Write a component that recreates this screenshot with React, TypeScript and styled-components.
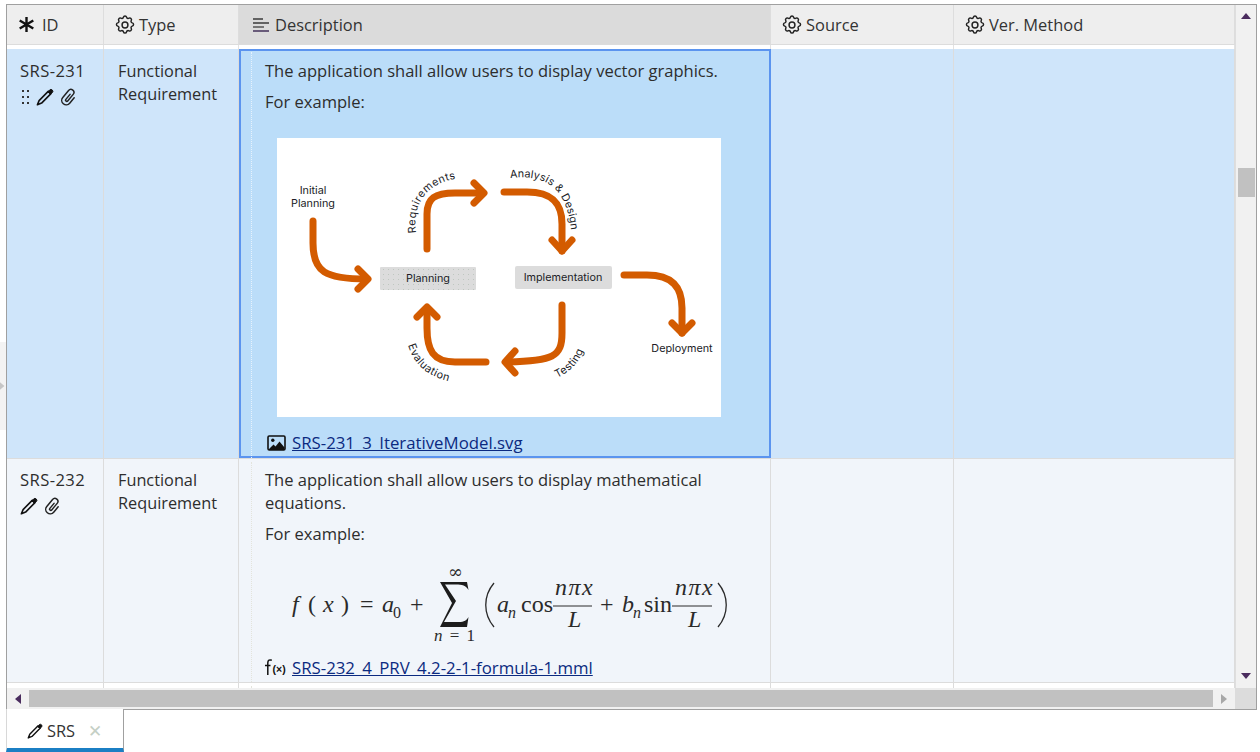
import React from "react";
import styled, { createGlobalStyle } from "styled-components";

const Global = createGlobalStyle`
  html, body { margin: 0; padding: 0; background: #fff; }
  body { width: 1260px; height: 752px; overflow: hidden; font-family: "Open Sans", "Noto Sans", sans-serif; color: #2d2d2d; }
`;

const COLS = "97px 135px 532px 183px 281px";

const Page = styled.div`
  display: flex;
  width: 1260px;
  height: 752px;
`;
const Rail = styled.div`
  width: 6px;
  padding-top: 342px;
  flex: none;
`;
const RailHandle = styled.div`
  height: 88px;
  background: #f3f3f3;
  display: flex;
  align-items: center;
  svg { margin-left: -2px; }
`;
const Main = styled.div`
  width: 1251px;
  display: flex;
  flex-direction: column;
  padding-top: 4px;
`;
const Frame = styled.div`
  height: 706px;
  box-sizing: border-box;
  border: 1px solid #a0a0a0;
  display: grid;
  grid-template-columns: 1228px 21px;
  grid-template-rows: 683px 21px;
  background: #fff;
`;
const TableArea = styled.div`
  overflow: hidden;
  display: flex;
  flex-direction: column;
`;
const HeaderRow = styled.div`
  display: grid;
  grid-template-columns: ${COLS};
  height: 40px;
  flex: none;
  background: #eeeeee;
  border-bottom: 1px solid #dcdcdc;
  box-sizing: border-box;
`;
const HeadCell = styled.div<{ $active?: boolean }>`
  display: flex;
  align-items: center;
  gap: 4px;
  padding-left: ${(p) => (p.$active ? 11 : 10)}px;
  box-sizing: border-box;
  font-size: 16.45px;
  color: #333;
  background: ${(p) => (p.$active ? "#dbdbdb" : "#eeeeee")};
  border-right: 1px solid #dddddd;
`;
const IconSlot = styled.span`
  width: 21px;
  display: flex;
  justify-content: center;
  align-items: center;
  flex: none;
  svg { flex: none; }
`;
const Spacer = styled.div`
  display: grid;
  grid-template-columns: ${COLS};
  height: 4px;
  flex: none;
`;
const SpacerCell = styled.div`
  border-right: 1px solid #e2e2e2;
`;
const Row = styled.div<{ $h: number; $bg: string; $pad: number }>`
  display: grid;
  grid-template-columns: ${COLS};
  height: ${(p) => p.$h}px;
  flex: none;
  background: ${(p) => p.$bg};
  border-bottom: 1px solid #dcdcdc;
  box-sizing: border-box;
  & > * { padding-top: ${(p) => p.$pad}px; }
`;
const Cell = styled.div`
  box-sizing: border-box;
  border-right: 1px solid #dcdcdc;
  padding-left: 14px;
  padding-right: 10px;
  font-size: 16.3px;
  line-height: 23px;
  color: #2d2d2d;
`;
const IdCell = styled(Cell)`
  padding-left: 13px;
  padding-right: 0;
  font-size: 16.6px;
  letter-spacing: 0.4px;
`;
const IdText = styled.div`
  margin: -1px 0 1px;
`;
const Actions = styled.div`
  display: flex;
  align-items: center;
  height: 24px;
  margin-top: 3px;
  gap: 6px;
`;
const Description = styled.div<{ $selected?: boolean }>`
  position: relative;
  box-sizing: border-box;
  border-right: 1px solid #dcdcdc;
  padding-left: 26px;
  padding-right: 24px;
  font-size: 16.55px;
  line-height: 23px;
  color: #2d2d2d;
  background: ${(p) => (p.$selected ? "#bbddf9" : "transparent")};
  outline: ${(p) => (p.$selected ? "2px solid #5b94ef" : "none")};
  outline-offset: -2px;
  &::before {
    content: "";
    position: absolute;
    left: 12px;
    top: 3px;
    bottom: 0;
    border-left: 1px dotted ${(p) => (p.$selected ? "#e6f2fc" : "#e3e4dc")};
  }
`;
const Para = styled.p`
  margin: 0 0 8px;
  &:first-child { margin-top: -1px; }
`;
const Figure = styled.div`
  margin: 25px 0 0 12px;
  width: 444px;
  height: 279px;
  background: #fff;
  svg { display: block; }
`;
const Formula = styled.div`
  margin: 0 0 0 -25px;
  padding-top: 1px;
  height: 103px;
  box-sizing: border-box;
  svg { display: block; }
`;
const FileLine = styled.div<{ $mt: number; $ml: number }>`
  display: flex;
  align-items: center;
  gap: 5px;
  margin-top: ${(p) => p.$mt}px;
  height: 23px;
  margin-left: ${(p) => p.$ml}px;
`;
const FileLink = styled.a`
  color: #0b2a80;
  text-decoration: underline;
  font-size: 16.8px;
  white-space: nowrap;
`;
const VBar = styled.div`
  background: #f1f1f1;
  border-left: 1px solid #dedede;
  display: flex;
  flex-direction: column;
  align-items: center;
  padding-top: 6px;
  box-sizing: border-box;
`;
const VThumb = styled.div`
  width: 17px;
  height: 29px;
  background: #c1c1c1;
  margin-top: 147px;
`;
const VDown = styled.div`
  margin-top: auto;
  padding-bottom: 7px;
  display: flex;
`;
const HBar = styled.div`
  background: #f1f1f1;
  display: flex;
  align-items: center;
`;
const HThumb = styled.div`
  width: 1185px;
  height: 17px;
  background: #c1c1c1;
`;
const ArrowBox = styled.div`
  width: 22px;
  height: 21px;
  display: flex;
  align-items: center;
  justify-content: center;
  flex: none;
`;
const Corner = styled.div`
  background: #dcdcdc;
`;
const TabStrip = styled.div`
  flex: 1;
  display: flex;
  align-items: stretch;
  margin-top: -1px;
`;
const Tab = styled.div`
  width: 118px;
  box-sizing: border-box;
  background: #fff;
  border-right: 1px solid #a0a0a0;
  border-left: 1px solid #d8d8d8;
  border-bottom: 4px solid #1b7fc4;
  display: flex;
  align-items: center;
  gap: 4px;
  padding: 4px 0 0 20px;
  font-size: 16.4px;
  color: #333;
`;
const Close = styled.span`
  color: #c5cfc5;
  font-size: 17px;
  margin-left: 9px;
  display: flex;
`;

const Gear = () => (
  <svg width="22" height="22" viewBox="0 0 24 24" fill="none" stroke="#222" strokeWidth="1.6" strokeLinejoin="round" strokeLinecap="round">
    <circle cx="12" cy="12" r="3.200" />
    <path d="M10.300 3.500c.4-1.900 3-1.900 3.400 0a1.800 1.800 0 0 0 2.600 1.100c1.600-1 3.500.9 2.500 2.500a1.800 1.800 0 0 0 1.100 2.600c1.900.4 1.900 3.100 0 3.500a1.800 1.800 0 0 0-1.100 2.600c1 1.600-.9 3.500-2.500 2.500a1.800 1.800 0 0 0-2.600 1.100c-.4 1.900-3 1.900-3.400 0a1.800 1.800 0 0 0-2.600-1.100c-1.600 1-3.500-.9-2.500-2.500a1.800 1.800 0 0 0-1.100-2.600c-1.900-.4-1.900-3.100 0-3.500a1.800 1.800 0 0 0 1.100-2.600c-1-1.600.9-3.500 2.500-2.500a1.800 1.800 0 0 0 2.600-1.100z" />
  </svg>
);
const Star = () => (
  <svg width="21" height="17" viewBox="0 0 21 17" stroke="#111" strokeWidth="2.400" strokeLinecap="butt">
    <path d="M9.500 1v15M2.700 4.500l13.600 8M16.300 4.500l-13.600 8" />
  </svg>
);
const Lines = () => (
  <svg width="18" height="18" viewBox="0 0 18 18" strokeWidth="1.500">
    <path d="M1 3h10" stroke="#3a3a3a" />
    <path d="M1 7h16" stroke="#3a3a3a" />
    <path d="M1 11h11" stroke="#555" />
    <path d="M1 15h16" stroke="#43305a" />
  </svg>
);
const Pencil = ({ size = 18 }: { size?: number }) => (
  <svg width={size} height={size} viewBox="0 0 18 18">
    <path d="M12.200 3.400 3.100 12.600 1.400 16.800l4.200-1.700 9.100-9.200z" fill="none" stroke="#111" strokeWidth="1.600" strokeLinejoin="round" />
    <path d="M12 3.600 13.600 2a1.900 1.900 0 0 1 2.700 0a1.900 1.900 0 0 1 0 2.700L14.500 6.300z" fill="#111" stroke="#111" strokeWidth=".9" />
  </svg>
);
const Clip = () => (
  <svg width="18" height="18" viewBox="0 0 18 18" fill="none" stroke="#222" strokeWidth="1.500" strokeLinecap="round">
    <g transform="rotate(40 8.500 9)">
      <path d="M8 6V12.500a1.200 1.200 0 0 0 2.400 0V4a3 3 0 0 0-6 0V13a4.500 4.500 0 0 0 9 0V6" />
    </g>
  </svg>
);
const Grip = () => (
  <svg width="10" height="16" viewBox="0 0 10 16" fill="#333">
    {[1, 7, 13].map((y) => [2, 7].map((x) => <rect key={`${x}-${y}`} x={x} y={y} width="2" height="2" />))}
  </svg>
);
const ImageIcon = () => (
  <svg width="20" height="18" viewBox="0 0 20 18">
    <rect x="1" y="2" width="17" height="14" rx="1.200" fill="none" stroke="#111" strokeWidth="1.600" />
    <circle cx="5.800" cy="6.300" r="1.700" fill="#111" />
    <path d="M2 15l4.500-4.500 2 2L12.500 7.500 17.500 13.500V16H2z" fill="#111" />
  </svg>
);
const Tri = ({ dir, color = "#4a2c5e" }: { dir: "u" | "d" | "l" | "r"; color?: string }) => {
  const pts = { u: "0,8 10,8 5,2", d: "0,2 10,2 5,8", l: "8,0 8,10 2,5", r: "2,0 2,10 8,5" }[dir];
  return (
    <svg width="10" height="10" viewBox="0 0 10 10" fill={color}>
      <polygon points={pts} />
    </svg>
  );
};

const arrowProps = { fill: "none", stroke: "#d35b00", strokeWidth: 7, strokeLinecap: "round" as const, strokeLinejoin: "round" as const };

const Diagram = () => (
  <svg width="444" height="279" viewBox="0 0 444 279" fontFamily="Inter, 'Open Sans', sans-serif" fontSize="10.800" fill="#211c26">
    <defs>
      <path id="req" d="M139 95 C 135 65 150 44 184 40" fill="none" />
      <path id="ana" d="M233 40 C 270 36 293 50 295 104" fill="none" />
      <path id="eva" d="M131 207 C 137 228 152 240 180 245" fill="none" />
      <path id="tes" d="M280 240 C 295 233 305 222 309 204" fill="none" />
      <pattern id="dots" width="5" height="5" patternUnits="userSpaceOnUse">
        <rect x="1" y="1" width="1" height="1" fill="#bfc7c0" />
      </pattern>
    </defs>
    <text x="36" y="56" textAnchor="middle">Initial</text>
    <text x="36" y="69" textAnchor="middle">Planning</text>
    <text letterSpacing=".5"><textPath href="#req">Requirements</textPath></text>
    <text letterSpacing=".1"><textPath href="#ana">Analysis &amp; Design</textPath></text>
    <text letterSpacing=".5"><textPath href="#eva">Evaluation</textPath></text>
    <text letterSpacing=".3"><textPath href="#tes">Testing</textPath></text>
    <text x="405" y="213.500" textAnchor="middle">Deployment</text>

    <path {...arrowProps} d="M36 83 V105 C36 134 48 141 90 141" />
    <path {...arrowProps} d="M81 131 L91 141 L81 151" />
    <path {...arrowProps} d="M150 111 V76 C150 60 158 55 178 55 H204" />
    <path {...arrowProps} d="M197 45 L207 55 L197 65" />
    <path {...arrowProps} d="M227 54 H250 C276 54 285 66 285 86 V113" />
    <path {...arrowProps} d="M275 102 L285 113 L295 102" />
    <path {...arrowProps} d="M347 137 H370 C396 137 405 150 405 170 V195" />
    <path {...arrowProps} d="M395 185 L405 195 L415 185" />
    <path {...arrowProps} d="M285 167 V195 C285 219 276 223 230 224" />
    <path {...arrowProps} d="M238 213 L228 224 L238 235" />
    <path {...arrowProps} d="M209 224 H178 C156 224 150 212 150 190 V171" />
    <path {...arrowProps} d="M140 179 L150 169 L160 179" />

    <rect x="103" y="129" width="96" height="23" rx="1" fill="#dcdcdc" />
    <rect x="103" y="129" width="96" height="23" rx="1" fill="url(#dots)" />
    <text x="151" y="144" textAnchor="middle">Planning</text>
    <rect x="238" y="128" width="97" height="23" rx="2" fill="#dcdcdc" />
    <text x="286" y="143" textAnchor="middle">Implementation</text>
  </svg>
);

const FormulaSvg = () => (
  <svg width="506" height="102" viewBox="0 0 506 102" fontFamily="'Liberation Serif', serif" fill="#2a2a2a">
    <g fontStyle="italic" fontSize="24">
      <text x="52" y="58">f</text>
      <text x="83" y="58">x</text>
      <text x="142" y="58">a</text>
      <text x="257" y="58">a</text>
      <text x="382" y="58">b</text>
      <text x="315" y="41" letterSpacing="1.500">nπx</text>
      <text x="435" y="41" letterSpacing="1.500">nπx</text>
      <text x="328" y="73">L</text>
      <text x="448" y="73">L</text>
    </g>
    <g fontSize="24">
      <text x="68" y="58">(</text>
      <text x="101" y="58">)</text>
      <text x="120" y="58">=</text>
      <text x="170" y="58">+</text>
      <text x="281" y="58">cos</text>
      <text x="360" y="58">+</text>
      <text x="404" y="58">sin</text>
    </g>
    <text x="153" y="64" fontSize="16">0</text>
    <text x="268" y="64" fontSize="16" fontStyle="italic">n</text>
    <text x="393" y="64" fontSize="16" fontStyle="italic">n</text>
    <text x="208" y="24" fontSize="18" fontFamily="'DejaVu Serif', serif">∞</text>
    <text x="194" y="87" fontSize="17" letterSpacing="1.500"><tspan fontStyle="italic">n</tspan> = 1</text>
    <path d="M200 28H227L228.500 36C226 31.500 222 30.500 216 30.500H205L216 47L204 68H219C224 68 227 66 228.500 63L227 73H200L212 49z" fill="#1c1c1c" />
    <path d="M313 52H352M432 52H472" stroke="#2a2a2a" strokeWidth="1" />
    <path d="M254 29C243 42 243 60 254 73" fill="none" stroke="#2a2a2a" strokeWidth="1.300" />
    <path d="M478 29C489 42 489 60 478 73" fill="none" stroke="#2a2a2a" strokeWidth="1.300" />
  </svg>
);

const FormulaIcon = () => (
  <svg width="22" height="19" viewBox="0 0 22 19" fill="#111">
    <path d="M6.800 2.200C4.600 1.400 2.800 2.200 2.800 4.800V17M0 7.500h5.500" fill="none" stroke="#111" strokeWidth="1.500" />
    <text x="7.500" y="15" fontSize="10.500" fontWeight="700" fontFamily="'Liberation Sans', sans-serif">(×)</text>
  </svg>
);

export default function App() {
  return (
    <>
      <Global />
      <Page>
        <Rail>
          <RailHandle><Tri dir="r" color="#c6c6c6" /></RailHandle>
        </Rail>
        <Main>
          <Frame>
            <TableArea>
              <HeaderRow>
                <HeadCell><IconSlot><Star /></IconSlot> ID</HeadCell>
                <HeadCell><IconSlot><Gear /></IconSlot> Type</HeadCell>
                <HeadCell $active><IconSlot><Lines /></IconSlot> Description</HeadCell>
                <HeadCell><IconSlot><Gear /></IconSlot> Source</HeadCell>
                <HeadCell><IconSlot><Gear /></IconSlot> Ver. Method</HeadCell>
              </HeaderRow>
              <Spacer>
                <SpacerCell /><SpacerCell /><SpacerCell /><SpacerCell /><SpacerCell />
              </Spacer>
              <Row $h={410} $bg="#cfe5fa" $pad={11}>
                <IdCell>
                  <IdText>SRS-231</IdText>
                  <Actions><Grip /><Pencil /><Clip /></Actions>
                </IdCell>
                <Cell>Functional Requirement</Cell>
                <Description $selected>
                  <Para>The application shall allow users to display vector graphics.</Para>
                  <Para>For example:</Para>
                  <Figure><Diagram /></Figure>
                  <FileLine $mt={14} $ml={2}><ImageIcon /><FileLink>SRS-231_3_IterativeModel.svg</FileLink></FileLine>
                </Description>
                <Cell />
                <Cell />
              </Row>
              <Row $h={224} $bg="#f1f5fa" $pad={10}>
                <IdCell>
                  <IdText>SRS-232</IdText>
                  <Actions><Pencil /><Clip /></Actions>
                </IdCell>
                <Cell>Functional Requirement</Cell>
                <Description>
                  <Para>The application shall allow users to display mathematical equations.</Para>
                  <Para>For example:</Para>
                  <Formula><FormulaSvg /></Formula>
                  <FileLine $mt={0} $ml={0}><FormulaIcon /><FileLink>SRS-232_4_PRV_4.2-2-1-formula-1.mml</FileLink></FileLine>
                </Description>
                <Cell />
                <Cell />
              </Row>
              <Row $h={10} $bg="#ffffff" $pad={0}>
                <Cell /><Cell /><Description /><Cell /><Cell />
              </Row>
            </TableArea>
            <VBar>
              <Tri dir="u" />
              <VThumb />
              <VDown><Tri dir="d" /></VDown>
            </VBar>
            <HBar>
              <ArrowBox><Tri dir="l" /></ArrowBox>
              <HThumb />
              <ArrowBox><Tri dir="r" color="#a8a8a8" /></ArrowBox>
            </HBar>
            <Corner />
          </Frame>
          <TabStrip>
            <Tab>
              <Pencil size={16} /> SRS
              <Close>✕</Close>
            </Tab>
          </TabStrip>
        </Main>
      </Page>
    </>
  );
}
